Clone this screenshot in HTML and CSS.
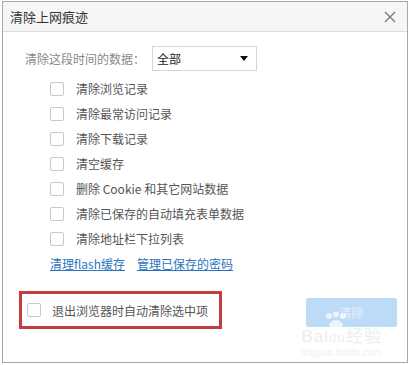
FILE: index.html
```html
<!DOCTYPE html>
<html lang="zh-CN">
<head>
    <meta charset="UTF-8">
    <title>清除上网痕迹</title>
    <link rel="stylesheet" href="styles.css">
</head>
<body>
    <div class="dialog">
        <div class="titlebar">
            <span class="title">清除上网痕迹</span>
            <svg class="close" width="12" height="12" viewBox="0 0 12 12">
                <path d="M1 1L11 11M11 1L1 11" stroke="#777" stroke-width="1.3" fill="none"/>
            </svg>
        </div>
        <div class="content">
            <div class="range">
                <span class="range-label">清除这段时间的数据：</span>
                <div class="select">
                    <span>全部</span>
                    <i class="arrow"></i>
                </div>
            </div>
            <ul class="checks">
                <li><i class="box"></i>清除浏览记录</li>
                <li><i class="box"></i>清除最常访问记录</li>
                <li><i class="box"></i>清除下载记录</li>
                <li><i class="box"></i>清空缓存</li>
                <li><i class="box"></i>删除 Cookie 和其它网站数据</li>
                <li><i class="box"></i>清除已保存的自动填充表单数据</li>
                <li><i class="box"></i>清除地址栏下拉列表</li>
            </ul>
            <div class="links">
                <a href="javascript:;">清理flash缓存</a>
                <a href="javascript:;">管理已保存的密码</a>
            </div>
        </div>
        <div class="footer">
            <label class="auto"><i class="box"></i>退出浏览器时自动清除选中项</label>
            <button class="btn">清除</button>
        </div>
        <div class="watermark">
            <svg class="paw" width="24" height="20" viewBox="0 0 24 20">
                <circle cx="5" cy="5" r="3" fill="#fff" opacity="0.7"/>
                <circle cx="12" cy="3.5" r="3" fill="#fff" opacity="0.7"/>
                <circle cx="19" cy="5" r="3" fill="#fff" opacity="0.7"/>
                <ellipse cx="12" cy="14" rx="6.5" ry="5" fill="#fff" opacity="0.7"/>
            </svg>
            <span class="wm-big">Bai<b>du</b>经验</span>
            <span class="wm-small">jingyan.baidu.com</span>
        </div>
    </div>
</body>
</html>
```

FILE: styles.css
```css
* {
    margin: 0;
    padding: 0;
    box-sizing: border-box;
}

ul,
li {
    list-style: none;
}

body {
    background: #fff;
    font-family: "Noto Sans CJK SC", "Liberation Sans", sans-serif;
    font-size: 12px;
    color: #555;
}

.dialog {
    position: relative;
    width: 406px;
    height: 362px;
    margin: 1px 0 0 2px;
    border: 1px solid #a8a8a8;
    background: #fff;
}

.titlebar {
    height: 30px;
    display: flex;
    align-items: center;
    justify-content: space-between;
    padding: 0 11px 0 7px;
    background: #f6f6f7;
    border-bottom: 1px solid #dcdcdc;
}

.title {
    font-size: 13px;
    color: #333;
}

.content {
    padding: 14px 0 0 22px;
}

.range {
    display: flex;
    align-items: center;
    height: 25px;
}

.range-label {
    width: 127px;
    color: #888;
}

.select {
    width: 105px;
    height: 25px;
    display: flex;
    align-items: center;
    justify-content: space-between;
    padding: 0 8px 0 4px;
    border: 1px solid #d6d6d6;
    color: #222;
}

.arrow {
    width: 0;
    height: 0;
    border-left: 4px solid transparent;
    border-right: 4px solid transparent;
    border-top: 5px solid #111;
}

.checks {
    margin-top: 5px;
    padding-left: 25px;
}

.checks li {
    height: 25px;
    display: flex;
    align-items: center;
}

.box {
    width: 14px;
    height: 14px;
    margin-right: 12px;
    border: 1px solid #c9c9c9;
    border-radius: 2px;
    background: #fff;
}

.links {
    height: 25px;
    padding-left: 25px;
    display: flex;
    align-items: center;
    gap: 12px;
}

.links a {
    color: #2b73c0;
    text-decoration: underline;
}

.footer {
    margin-top: 15px;
    padding: 0 10px 0 16px;
    display: flex;
    justify-content: space-between;
    align-items: flex-start;
}

.auto {
    height: 38px;
    display: flex;
    align-items: center;
    padding: 0 11px 0 5px;
    border: 3px solid #c33c40;
}

.auto .box {
    margin-right: 11px;
}

.btn {
    width: 91px;
    height: 29px;
    margin-top: 7px;
    border: none;
    border-radius: 2px;
    background: #bcdbf7;
    color: #e3effb;
    font-family: inherit;
    font-size: 12px;
}

.watermark {
    position: absolute;
    left: 291px;
    top: 309px;
    width: 95px;
    display: flex;
    flex-direction: column;
    align-items: center;
    pointer-events: none;
}

.paw {
    margin-left: -12px;
}

.wm-big {
    margin-top: -3px;
    font-family: "Liberation Sans", sans-serif;
    font-size: 17px;
    line-height: 18px;
    color: #ededed;
    letter-spacing: 1px;
}

.wm-big b {
    font-weight: normal;
    font-size: 13px;
}

.wm-small {
    font-family: "Liberation Sans", sans-serif;
    font-size: 10px;
    line-height: 12px;
    color: #f1f1f1;
}
```
